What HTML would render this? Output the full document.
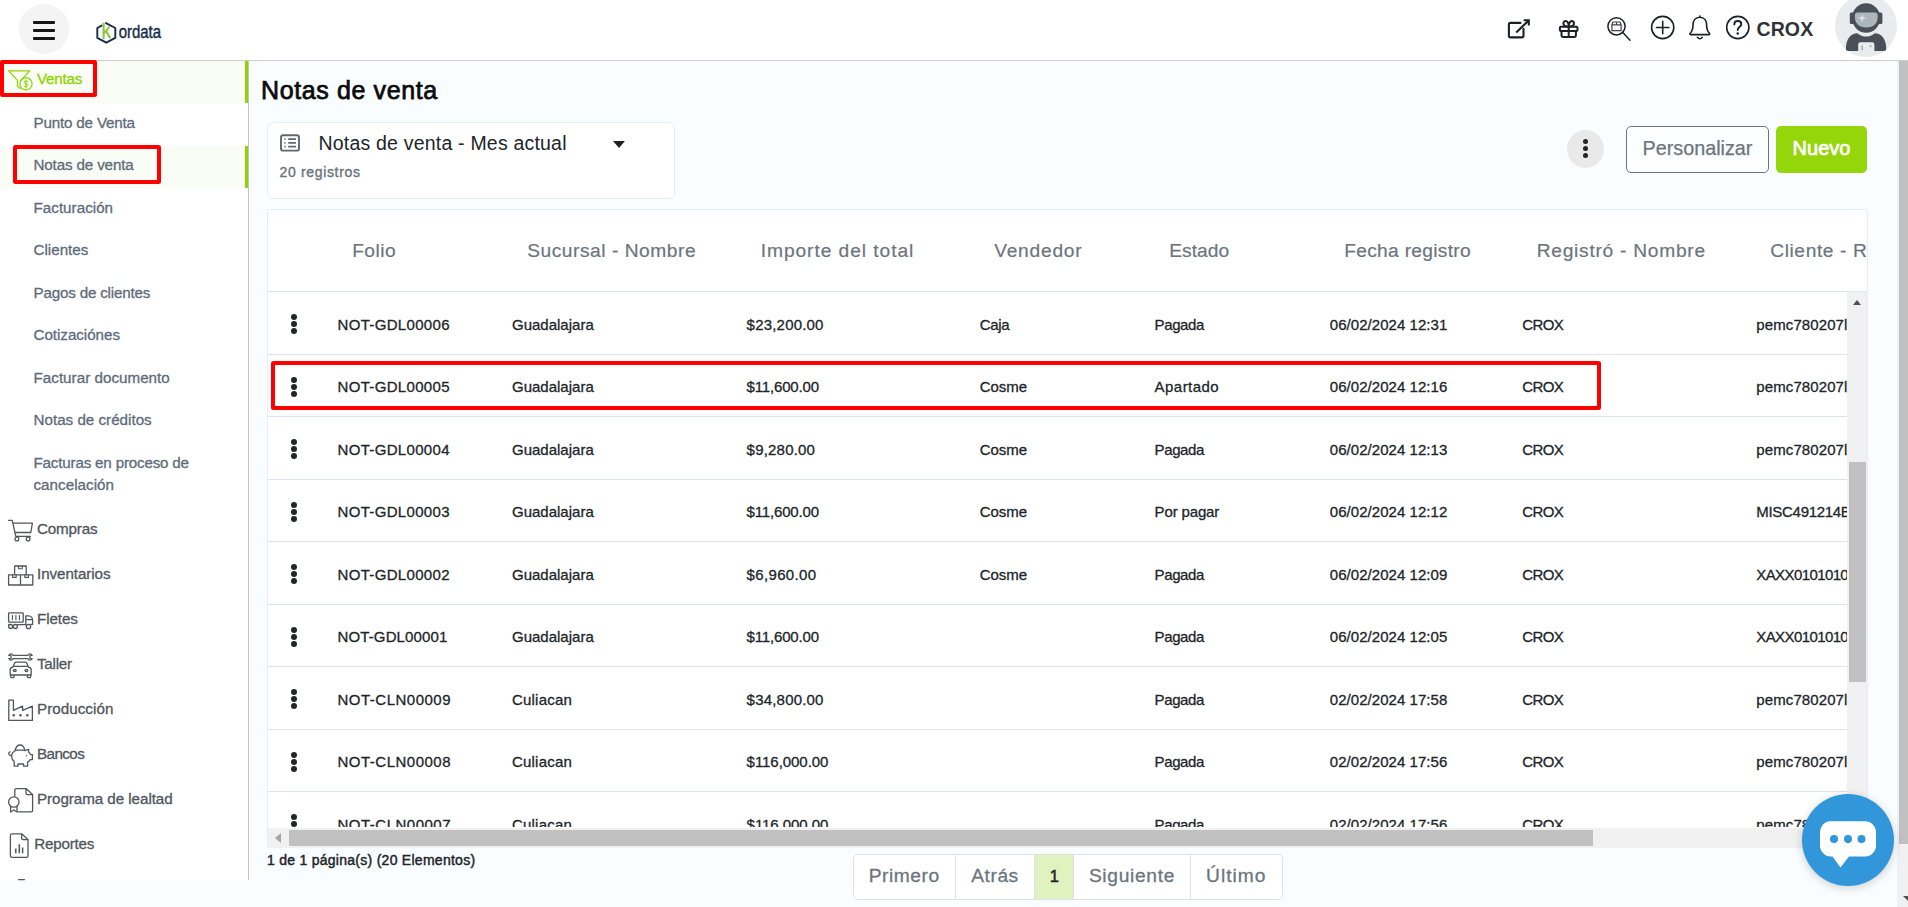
<!DOCTYPE html>
<html lang="es">
<head>
<meta charset="utf-8">
<title>Notas de venta</title>
<style>
*{box-sizing:border-box;margin:0;padding:0}
html,body{width:1908px;height:907px;overflow:hidden}
body{font-family:"Liberation Sans",sans-serif;background:#fafdff;color:#212529;position:relative}
.a{position:absolute;white-space:nowrap}
svg{position:absolute;overflow:visible}
#header{position:absolute;left:0;top:0;width:1908px;height:61px;background:#fff;border-bottom:1px solid #cdcdcd}
#burger{position:absolute;left:19px;top:4px;width:50px;height:50px;border-radius:50%;background:#f4f4f4}
#burger i{position:absolute;left:14px;width:22px;height:3.2px;background:#151515;border-radius:1px}
#sidebar{position:absolute;left:0;top:61px;width:249px;height:819px;background:#fff;border-right:1px solid #c4c4c4}
.act{position:absolute;left:0;width:248px;background:#fafdf5;border-right:3px solid #8fd400}
.sb{position:absolute;left:33.5px;font-size:15.2px;color:#5f6b7a;white-space:nowrap;line-height:20px;-webkit-text-stroke:0.3px #5f6b7a}
.mi{position:absolute;left:37px;font-size:15.2px;color:#51565c;white-space:nowrap;line-height:20px;-webkit-text-stroke:0.3px #51565c}
.red{position:absolute;border:4px solid #fe0000;border-radius:2.5px}
.ico{fill:none;stroke:#53565b;stroke-width:1.3;stroke-linecap:round;stroke-linejoin:round}
.hico{fill:none;stroke:#1d2125;stroke-width:1.9;stroke-linecap:round;stroke-linejoin:round}
#card{position:absolute;left:267px;top:208.6px;width:1601px;height:639.4px;background:#fff;border:1px solid #e4edf9;border-radius:2px}
.th{position:absolute;top:240px;font-size:19.2px;letter-spacing:0.5px;color:#6c757d;white-space:nowrap;line-height:22px;-webkit-text-stroke:0.2px #6c757d}
.td{position:absolute;font-size:15px;letter-spacing:0.15px;color:#212529;white-space:nowrap;line-height:20px;-webkit-text-stroke:0.3px #212529}
.hl{position:absolute;left:268px;width:1579px;height:1px;background:#dde4ee}
.dots i{position:absolute;width:6px;height:6px;border-radius:50%;background:#212529;left:0}
.dots{position:absolute;width:6px;height:20px}
.pg{position:absolute;top:853.5px;height:46px;border:1px solid #dee2e6;border-left:none;background:#fff;font-size:19.2px;color:#6c757d;line-height:42.3px;text-align:center;-webkit-text-stroke:0.3px #6c757d;padding-left:0.5px}
</style>
</head>
<body>
<div id="header">
<div id="burger"><i style="top:17.1px"></i><i style="top:24.7px"></i><i style="top:32.5px"></i></div>
<svg style="left:90px;top:16px" width="80" height="34" viewBox="90 16 80 34">
<path d="M106 23.1 L115.3 28 L115.3 37.8 L106.3 42.7 L97.3 37.8 L97.3 28 L101.6 25.6" fill="none" stroke="#14304a" stroke-width="1.9" stroke-linejoin="round" stroke-linecap="round"/>
<path d="M103.6 23.6 L103.6 38.3 M108.9 27.4 L104.6 32.6 M106.3 31.2 L109.8 37.6" fill="none" stroke="#8cc63f" stroke-width="2.1" stroke-linecap="round"/>
<text x="118.7" y="37.9" font-family="Liberation Sans, sans-serif" font-size="18.3" fill="#14304a" stroke="#14304a" stroke-width="0.45" textLength="42.4" lengthAdjust="spacingAndGlyphs">ordata</text>
</svg>
<svg style="left:1500px;top:8px;" width="260" height="40" viewBox="1500 8 260 40" class="hico">
<g stroke-width="2.1"><path d="M1520.5 22.9 H1510.5 Q1508.9 22.9 1508.9 24.5 V35.8 Q1508.9 37.4 1510.5 37.4 H1521.9 Q1523.5 37.4 1523.5 35.8 V28.8"/>
<path d="M1516.2 32.6 L1528.6 20.4 M1523.6 20.2 H1528.8 V25.6" stroke-linecap="butt" stroke-linejoin="miter"/></g>
<g stroke-width="2">
<rect x="1559.9" y="26.7" width="17.6" height="4.4" rx="1"/>
<path d="M1561.5 31.1 V35.6 Q1561.5 37 1562.9 37 H1574.5 Q1575.9 37 1575.9 35.6 V31.1 M1568.7 26.7 V37"/>
<path d="M1568.7 26.5 C1566.5 26.5 1563.4 25.8 1563.4 23.4 C1563.4 21.6 1565 20.7 1566.2 21.2 C1567.7 21.8 1568.7 24.2 1568.7 26.5 C1568.7 24.2 1569.7 21.8 1571.2 21.2 C1572.4 20.7 1574 21.6 1574 23.4 C1574 25.8 1570.9 26.5 1568.7 26.5"/>
</g>
<g stroke-width="1.5">
<circle cx="1616.5" cy="26.3" r="8.6"/>
<path d="M1622.8 32.4 L1630 40.2"/>
<path d="M1611.9 24.8 V30.7 H1621.1 V24.8 M1611.9 24.8 L1613 22 H1620 L1621.1 24.8 Z M1616.5 22 V24.8" stroke-width="1.2" stroke="#444"/>
</g>
<g stroke-width="1.6">
<circle cx="1662.7" cy="27.5" r="11.1"/>
<path d="M1656.5 27.5 H1668.9 M1662.7 21.3 V33.7"/>
<path d="M1699.8 16 V17.3 M1699.8 17.3 C1695.3 17.3 1693 20.8 1693 25 C1693 30 1691.5 32 1690 33.5 Q1689.6 34.6 1690.8 34.6 H1708.8 Q1710 34.6 1709.6 33.5 C1708.1 32 1706.6 30 1706.6 25 C1706.6 20.8 1704.3 17.3 1699.8 17.3 Z M1697.4 37.3 Q1699.8 40.3 1702.2 37.3"/>
<circle cx="1737.8" cy="27.5" r="11.1"/>
<path d="M1734.3 24.4 C1734.3 22.3 1735.8 21 1737.8 21 C1739.9 21 1741.3 22.3 1741.3 24.2 C1741.3 26.8 1737.7 26.9 1737.7 30" stroke-width="1.9"/>
</g>
<circle cx="1737.7" cy="33.6" r="1.25" fill="#1d2125" stroke="none"/>
</svg>
<div class="a" style="left:1756.5px;top:15.5px;font-size:19.5px;font-weight:700;line-height:26px;color:#2f3336;letter-spacing:0.1px">CROX</div>
<div class="a" style="left:1835px;top:-5.5px;width:62.4px;height:62.4px;border-radius:50%;background:#e9ecef;overflow:hidden"></div>
<svg style="left:1835px;top:-5.5px" width="62.4" height="62.4" viewBox="0 0 62.4 62.4">
<rect x="14.8" y="17.5" width="32.6" height="11.6" rx="1.5" fill="#495057"/>
<ellipse cx="31.1" cy="23" rx="14" ry="14.8" fill="#495057"/>
<path d="M22.8 17.5 H39.8 Q42.7 17.5 42.7 20.4 V22 C42.7 28.6 38.2 32.5 31.3 32.5 C24.4 32.5 19.9 28.6 19.9 22 V20.4 Q19.9 17.5 22.8 17.5 Z" fill="#adb5bd"/>
<path d="M27.2 19 L28.2 22.1 L31.6 23.1 L28.2 24.1 L27.2 27.2 L26.2 24.1 L22.8 23.1 L26.2 22.1 Z" fill="#dfe3e7"/>
<path d="M10.9 53.5 C10.9 44 16 38.2 22.5 38.2 C25 40.6 28 41.6 31.1 41.6 C34.2 41.6 37.2 40.6 39.7 38.2 C46.2 38.2 51.3 44 51.3 53.5 Q51.3 56 48.8 56 H13.4 Q10.9 56 10.9 53.5 Z" fill="#495057"/>
<path d="M23.2 56 V49.6 Q23.2 47.2 25.6 47.2 H37 Q39.4 47.2 39.4 49.6 V56 Z" fill="#e9ecef"/>
<rect x="26.2" y="50" width="1.8" height="5.5" rx="0.9" fill="#adb5bd"/>
<circle cx="35.6" cy="51.2" r="1.1" fill="#adb5bd"/>
</svg>
</div>
<div id="sidebar">
<div class="act" style="top:0;height:42px"></div>
<div class="act" style="top:85px;height:42px"></div>
</div>
<svg style="left:6px;top:68px;stroke:#8fd400;stroke-width:1.25" width="30" height="24" viewBox="6 68 30 24" class="ico">
<path d="M8.6 70.8 H29.7 L21.6 79.6 M8.6 70.8 L17.5 80.4 V86.2 L20.2 88.4"/>
<circle cx="26" cy="83.8" r="6.1"/>
<path d="M28 81.6 C27.2 80.6 24.2 80.6 24.2 82.3 C24.2 84.2 27.9 83.3 27.9 85.3 C27.9 87 24.8 87 23.9 85.9 M26 79.8 V87.9" stroke-width="1"/>
</svg>
<div class="mi" style="top:68.7px;letter-spacing:-0.2px;color:#8fd400;-webkit-text-stroke:0.3px #8fd400">Ventas</div>
<div class="sb" style="top:112.5px;letter-spacing:-0.18px">Punto de Venta</div>
<div class="sb" style="top:155.1px;letter-spacing:-0.15px">Notas de venta</div>
<div class="sb" style="top:197.6px;letter-spacing:0.02px">Facturación</div>
<div class="sb" style="top:240.2px;letter-spacing:0px">Clientes</div>
<div class="sb" style="top:282.7px;letter-spacing:-0.19px">Pagos de clientes</div>
<div class="sb" style="top:325.3px;letter-spacing:-0.04px">Cotizaciónes</div>
<div class="sb" style="top:367.8px;letter-spacing:0.02px">Facturar documento</div>
<div class="sb" style="top:410.4px;letter-spacing:0px">Notas de créditos</div>
<div class="sb" style="top:452.5px;letter-spacing:-0.19px">Facturas en proceso de</div>
<div class="sb" style="top:475.0px;letter-spacing:0.03px">cancelación</div>
<div class="mi" style="top:519.2px;left:37.0px;letter-spacing:-0.17px">Compras</div>
<div class="mi" style="top:564.2px;left:37.0px;letter-spacing:-0.07px">Inventarios</div>
<div class="mi" style="top:609.1px;left:37.0px;letter-spacing:-0.09px">Fletes</div>
<div class="mi" style="top:654.1px;left:37.0px;letter-spacing:-0.26px">Taller</div>
<div class="mi" style="top:699.0px;left:37.0px;letter-spacing:0.04px">Producción</div>
<div class="mi" style="top:744.0px;left:37.0px;letter-spacing:-0.58px">Bancos</div>
<div class="mi" style="top:788.9px;left:37.0px;letter-spacing:-0.06px">Programa de lealtad</div>
<div class="mi" style="top:833.9px;left:34.3px;letter-spacing:-0.24px">Reportes</div>
<svg style="left:4px;top:515px;" width="36" height="347" viewBox="4 515 36 347" class="ico">
<!-- cart -->
<path d="M8.6 520.3 H12.2 L15.8 536.3 H30.4 M13.1 523.2 H32.4 L30.8 532.5 H15"/>
<circle cx="16.9" cy="539" r="1.9"/><circle cx="28.1" cy="539" r="1.9"/>
<!-- boxes -->
<path d="M8.6 574.8 H32.8 V585 H8.6 Z M20.5 574.8 V585 M14.6 574.8 V566 H26.2 V574.8"/>
<path d="M12.6 574.8 V577.4 H16.2 V574.8 M24.8 574.8 V577.4 H28.4 V574.8 M18.6 566 V568.8 H22.2 V566" stroke-width="1.1"/>
<!-- truck -->
<rect x="8.6" y="612.8" width="14.6" height="9.4" rx="0.8"/>
<path d="M12.4 615.2 V619.8 M15.9 615.2 V619.8 M19.4 615.2 V619.8" stroke-width="1.1"/>
<path d="M25.8 624.4 V615.9 H28.6 C31 615.9 32.6 618 32.6 620.4 V624.4 H30.8 M25.8 619.6 H32.4 M17.6 624.6 H26.2 M8.8 624.4 H9.2"/>
<circle cx="10.6" cy="626.5" r="2"/><circle cx="15.3" cy="626.5" r="2"/><circle cx="28.5" cy="626.5" r="2.2"/>
<!-- taller -->
<path d="M13 655.3 H28 M13 658.7 H28 M13 655.3 C12.4 653.6 9.6 653.4 8.8 655.4 L11 655.6 V658.4 L8.8 658.6 C9.6 660.6 12.4 660.4 13 658.7 M28 655.3 C28.6 653.6 31.4 653.4 32.2 655.4 L30 655.6 V658.4 L32.2 658.6 C31.4 660.6 28.6 660.4 28 658.7"/>
<path d="M12.8 667.2 L14.8 662.8 Q15.2 662.2 16 662.2 H25.4 Q26.2 662.2 26.6 662.8 L28.6 667.2 M12.8 667.2 C11 667.4 10.2 668.6 10.2 670 V675 H31.2 V670 C31.2 668.6 30.4 667.4 28.6 667.2 M13.6 666.4 H27.8 M10.8 675 V677 Q10.8 677.6 11.4 677.6 H13.4 Q14 677.6 14 677 V675 M27.4 675 V677 Q27.4 677.6 28 677.6 H30 Q30.6 677.6 30.6 677 V675"/>
<ellipse cx="14.8" cy="670.4" rx="1.4" ry="1.1"/><ellipse cx="26.4" cy="670.4" rx="1.4" ry="1.1"/>
<!-- factory -->
<path d="M8.8 700.2 H13.4 V710.4 L22.6 706.2 V710.4 L32.4 706.2 V720.4 H8.8 Z"/>
<circle cx="13.7" cy="715.2" r="1.2" fill="#53565b" stroke="none"/><circle cx="20.5" cy="715.2" r="1.2" fill="#53565b" stroke="none"/><circle cx="27.3" cy="715.2" r="1.2" fill="#53565b" stroke="none"/>
<!-- piggy -->
<path d="M15.2 750.4 C16 746.4 18.2 745 20 745 C22 745 24.2 746.6 24.6 750"/>
<path d="M17 750.2 C13.6 751 11.6 753.6 11.6 756.4 C11.6 758.6 12.8 760.4 14.2 761.6 V766.2 H18 V764 H23.6 V766.2 H27.6 V762.2 C28.8 761.6 29.6 760.6 30.2 759.6 H32.4 V754.6 H30.6 C30.2 753.6 29.4 752.6 28.4 751.8 L28.8 749.4 C27.4 749.4 26.2 750 25.4 750.6 C24.6 750.3 23.4 750.2 22.4 750.2 Z"/>
<path d="M11.4 755.6 C9.8 755.8 8.8 754.6 8.8 753.4 C8.8 752.4 9.4 751.8 10.2 751.8"/>
<circle cx="26.4" cy="755.8" r="0.7" fill="#53565b" stroke="none"/>
<!-- lealtad -->
<path d="M14.8 796.2 V790 Q14.8 788.6 16.2 788.6 H26 L32.6 794.6 V810.4 Q32.6 811.8 31.2 811.8 H18.2 M26 788.6 V793.2 Q26 794.6 27.4 794.6 H32.6"/>
<circle cx="13.8" cy="802" r="5.2"/>
<path d="M10.6 806.4 V812 L13.8 810 L17 812 V806.4"/>
<!-- reportes -->
<path d="M10.4 835.4 Q10.4 833.8 12 833.8 H21.6 L28 839.6 V855.8 Q28 857.4 26.4 857.4 H12 Q10.4 857.4 10.4 855.8 Z M21.6 833.8 V838.2 Q21.6 839.6 23 839.6 H28"/>
<path d="M15.8 848.6 V853.2 M19.3 844.2 V853.2 M22.6 847.6 V853.2" stroke-width="1.5" stroke-linecap="butt"/>
<!-- next item peek -->
<path d="M18.6 879.6 H24.4" stroke-width="1.4"/>
</svg>
<div class="a" style="left:261px;top:74px;font-size:25px;font-weight:400;line-height:32px;color:#0c0c0c;letter-spacing:0.62px;-webkit-text-stroke:0.75px #0c0c0c">Notas de venta</div>
<div class="a" style="left:267px;top:122px;width:408px;height:77px;background:#fff;border:1px solid #e4edf9;border-radius:6px"></div>
<svg style="left:278px;top:132px;stroke:#5f6870" width="24" height="22" viewBox="278 132 24 22" class="ico">
<rect x="281" y="135.2" width="18" height="15.4" rx="2.2" stroke-width="1.9"/>
<path d="M288.2 139.1 H296 M288.2 142.9 H296 M288.2 146.7 H296" stroke-width="1.7" stroke-linecap="butt"/>
<path d="M284.4 139.1 H285.6 M284.4 142.9 H285.6 M284.4 146.7 H285.6" stroke-width="1.8" stroke-linecap="butt"/>
</svg>
<div class="a" style="left:318.5px;top:131px;font-size:19.5px;line-height:24px;letter-spacing:0.2px;color:#212529">Notas de venta - Mes actual</div>
<div class="a" style="left:613px;top:140.5px;width:0;height:0;border-left:6px solid transparent;border-right:6px solid transparent;border-top:7px solid #222"></div>
<div class="a" style="left:279.5px;top:161.9px;font-size:14px;line-height:20px;letter-spacing:0.66px;color:#6c757d;-webkit-text-stroke:0.4px #6c757d">20 registros</div>
<div class="a" style="left:1567px;top:130px;width:37px;height:37.6px;border-radius:50%;background:#e9e9e9"></div>
<div class="dots" style="left:1583px;top:139.1px"><i style="top:0;width:5.4px;height:5.4px"></i><i style="top:7px;width:5.4px;height:5.4px"></i><i style="top:14px;width:5.4px;height:5.4px"></i></div>
<div class="a" style="left:1626px;top:126px;width:143px;height:47px;border:1px solid #6c757d;border-radius:5px;background:#fcfeff;font-size:19.8px;line-height:43px;text-align:center;color:#6c757d;-webkit-text-stroke:0.25px #6c757d">Personalizar</div>
<div class="a" style="left:1776px;top:126px;width:91px;height:47px;border-radius:5px;background:#94d60a;font-size:20px;font-weight:400;-webkit-text-stroke:0.7px #fff;line-height:44px;text-align:center;color:#fff">Nuevo</div>
<div id="card"></div>
<div class="a" style="left:268px;top:209px;width:1599px;height:82px;overflow:hidden">
<div class="th" style="left:84.2px;top:30.7px;letter-spacing:0.45px">Folio</div>
<div class="th" style="left:259.2px;top:30.7px;letter-spacing:0.53px">Sucursal - Nombre</div>
<div class="th" style="left:492.7px;top:30.7px;letter-spacing:0.94px">Importe del total</div>
<div class="th" style="left:726.2px;top:30.7px;letter-spacing:0.76px">Vendedor</div>
<div class="th" style="left:901.2px;top:30.7px;letter-spacing:0.05px">Estado</div>
<div class="th" style="left:1076.2px;top:30.7px;letter-spacing:0.3px">Fecha registro</div>
<div class="th" style="left:1268.7px;top:30.7px;letter-spacing:0.73px">Registró - Nombre</div>
<div class="th" style="left:1502.2px;top:30.7px;letter-spacing:0.6px">Cliente - R</div>
</div>
<div class="hl" style="top:291px;width:1599px;background:#dfe5ec"></div>
<div class="a" style="left:268px;top:292px;width:1579px;height:535px;overflow:hidden">
<div class="td" style="left:69.5px;top:22.7px;letter-spacing:0.33px">NOT-GDL00006</div>
<div class="td" style="left:244px;top:22.7px;letter-spacing:0px">Guadalajara</div>
<div class="td" style="left:478.6px;top:22.7px;letter-spacing:0.2px">$23,200.00</div>
<div class="td" style="left:711.7px;top:22.7px;letter-spacing:-0.3px">Caja</div>
<div class="td" style="left:886.5999999999999px;top:22.7px;letter-spacing:-0.4px">Pagada</div>
<div class="td" style="left:1061.8px;top:22.7px;letter-spacing:0.05px">06/02/2024 12:31</div>
<div class="td" style="left:1254.2px;top:22.7px;letter-spacing:-0.6px">CROX</div>
<div class="td" style="left:1488.3px;top:22.7px;letter-spacing:0.1px">pemc780207l00</div>
<div class="dots" style="left:22.80000000000001px;top:22.4px"><i style="top:0"></i><i style="top:7px"></i><i style="top:14px"></i></div>
<div class="hl" style="left:0;top:62px"></div>
<div class="td" style="left:69.5px;top:85.2px;letter-spacing:0.33px">NOT-GDL00005</div>
<div class="td" style="left:244px;top:85.2px;letter-spacing:0px">Guadalajara</div>
<div class="td" style="left:478.6px;top:85.2px;letter-spacing:-0.17px">$11,600.00</div>
<div class="td" style="left:711.7px;top:85.2px;letter-spacing:-0.05px">Cosme</div>
<div class="td" style="left:886.5999999999999px;top:85.2px;letter-spacing:0.45px">Apartado</div>
<div class="td" style="left:1061.8px;top:85.2px;letter-spacing:0.05px">06/02/2024 12:16</div>
<div class="td" style="left:1254.2px;top:85.2px;letter-spacing:-0.6px">CROX</div>
<div class="td" style="left:1488.3px;top:85.2px;letter-spacing:0.1px">pemc780207l00</div>
<div class="dots" style="left:22.80000000000001px;top:84.9px"><i style="top:0"></i><i style="top:7px"></i><i style="top:14px"></i></div>
<div class="hl" style="left:0;top:124px"></div>
<div class="td" style="left:69.5px;top:147.7px;letter-spacing:0.33px">NOT-GDL00004</div>
<div class="td" style="left:244px;top:147.7px;letter-spacing:0px">Guadalajara</div>
<div class="td" style="left:478.6px;top:147.7px;letter-spacing:0.2px">$9,280.00</div>
<div class="td" style="left:711.7px;top:147.7px;letter-spacing:-0.05px">Cosme</div>
<div class="td" style="left:886.5999999999999px;top:147.7px;letter-spacing:-0.4px">Pagada</div>
<div class="td" style="left:1061.8px;top:147.7px;letter-spacing:0.05px">06/02/2024 12:13</div>
<div class="td" style="left:1254.2px;top:147.7px;letter-spacing:-0.6px">CROX</div>
<div class="td" style="left:1488.3px;top:147.7px;letter-spacing:0.1px">pemc780207l00</div>
<div class="dots" style="left:22.80000000000001px;top:147.4px"><i style="top:0"></i><i style="top:7px"></i><i style="top:14px"></i></div>
<div class="hl" style="left:0;top:187px"></div>
<div class="td" style="left:69.5px;top:210.2px;letter-spacing:0.33px">NOT-GDL00003</div>
<div class="td" style="left:244px;top:210.2px;letter-spacing:0px">Guadalajara</div>
<div class="td" style="left:478.6px;top:210.2px;letter-spacing:-0.17px">$11,600.00</div>
<div class="td" style="left:711.7px;top:210.2px;letter-spacing:-0.05px">Cosme</div>
<div class="td" style="left:886.5999999999999px;top:210.2px;letter-spacing:-0.15px">Por pagar</div>
<div class="td" style="left:1061.8px;top:210.2px;letter-spacing:0.05px">06/02/2024 12:12</div>
<div class="td" style="left:1254.2px;top:210.2px;letter-spacing:-0.6px">CROX</div>
<div class="td" style="left:1488.3px;top:210.2px;letter-spacing:-0.3px">MISC491214B86</div>
<div class="dots" style="left:22.80000000000001px;top:209.9px"><i style="top:0"></i><i style="top:7px"></i><i style="top:14px"></i></div>
<div class="hl" style="left:0;top:249px"></div>
<div class="td" style="left:69.5px;top:272.7px;letter-spacing:0.33px">NOT-GDL00002</div>
<div class="td" style="left:244px;top:272.7px;letter-spacing:0px">Guadalajara</div>
<div class="td" style="left:478.6px;top:272.7px;letter-spacing:0.34px">$6,960.00</div>
<div class="td" style="left:711.7px;top:272.7px;letter-spacing:-0.05px">Cosme</div>
<div class="td" style="left:886.5999999999999px;top:272.7px;letter-spacing:-0.4px">Pagada</div>
<div class="td" style="left:1061.8px;top:272.7px;letter-spacing:0.05px">06/02/2024 12:09</div>
<div class="td" style="left:1254.2px;top:272.7px;letter-spacing:-0.6px">CROX</div>
<div class="td" style="left:1488.3px;top:272.7px;letter-spacing:-0.6px">XAXX010101000</div>
<div class="dots" style="left:22.80000000000001px;top:272.4px"><i style="top:0"></i><i style="top:7px"></i><i style="top:14px"></i></div>
<div class="hl" style="left:0;top:312px"></div>
<div class="td" style="left:69.5px;top:335.2px;letter-spacing:0.13px">NOT-GDL00001</div>
<div class="td" style="left:244px;top:335.2px;letter-spacing:0px">Guadalajara</div>
<div class="td" style="left:478.6px;top:335.2px;letter-spacing:-0.17px">$11,600.00</div>
<div class="td" style="left:886.5999999999999px;top:335.2px;letter-spacing:-0.4px">Pagada</div>
<div class="td" style="left:1061.8px;top:335.2px;letter-spacing:0.05px">06/02/2024 12:05</div>
<div class="td" style="left:1254.2px;top:335.2px;letter-spacing:-0.6px">CROX</div>
<div class="td" style="left:1488.3px;top:335.2px;letter-spacing:-0.6px">XAXX010101000</div>
<div class="dots" style="left:22.80000000000001px;top:334.9px"><i style="top:0"></i><i style="top:7px"></i><i style="top:14px"></i></div>
<div class="hl" style="left:0;top:374px"></div>
<div class="td" style="left:69.5px;top:397.7px;letter-spacing:0.5px">NOT-CLN00009</div>
<div class="td" style="left:244px;top:397.7px;letter-spacing:0.2px">Culiacan</div>
<div class="td" style="left:478.6px;top:397.7px;letter-spacing:0.2px">$34,800.00</div>
<div class="td" style="left:886.5999999999999px;top:397.7px;letter-spacing:-0.4px">Pagada</div>
<div class="td" style="left:1061.8px;top:397.7px;letter-spacing:0.05px">02/02/2024 17:58</div>
<div class="td" style="left:1254.2px;top:397.7px;letter-spacing:-0.6px">CROX</div>
<div class="td" style="left:1488.3px;top:397.7px;letter-spacing:0.1px">pemc780207l00</div>
<div class="dots" style="left:22.80000000000001px;top:397.4px"><i style="top:0"></i><i style="top:7px"></i><i style="top:14px"></i></div>
<div class="hl" style="left:0;top:437px"></div>
<div class="td" style="left:69.5px;top:460.2px;letter-spacing:0.5px">NOT-CLN00008</div>
<div class="td" style="left:244px;top:460.2px;letter-spacing:0.2px">Culiacan</div>
<div class="td" style="left:478.6px;top:460.2px;letter-spacing:-0.05px">$116,000.00</div>
<div class="td" style="left:886.5999999999999px;top:460.2px;letter-spacing:-0.4px">Pagada</div>
<div class="td" style="left:1061.8px;top:460.2px;letter-spacing:0.05px">02/02/2024 17:56</div>
<div class="td" style="left:1254.2px;top:460.2px;letter-spacing:-0.6px">CROX</div>
<div class="td" style="left:1488.3px;top:460.2px;letter-spacing:0.1px">pemc780207l00</div>
<div class="dots" style="left:22.80000000000001px;top:459.9px"><i style="top:0"></i><i style="top:7px"></i><i style="top:14px"></i></div>
<div class="hl" style="left:0;top:499px"></div>
<div class="td" style="left:69.5px;top:522.7px;letter-spacing:0.5px">NOT-CLN00007</div>
<div class="td" style="left:244px;top:522.7px;letter-spacing:0.2px">Culiacan</div>
<div class="td" style="left:478.6px;top:522.7px;letter-spacing:-0.05px">$116,000.00</div>
<div class="td" style="left:886.5999999999999px;top:522.7px;letter-spacing:-0.4px">Pagada</div>
<div class="td" style="left:1061.8px;top:522.7px;letter-spacing:0.05px">02/02/2024 17:56</div>
<div class="td" style="left:1254.2px;top:522.7px;letter-spacing:-0.6px">CROX</div>
<div class="td" style="left:1488.3px;top:522.7px;letter-spacing:0.1px">pemc780207l00</div>
<div class="dots" style="left:22.80000000000001px;top:522.4px"><i style="top:0"></i><i style="top:7px"></i><i style="top:14px"></i></div>
</div>
<div class="a" style="left:1847px;top:292px;width:20px;height:555px;background:#f1f1f1"></div>
<div class="a" style="left:1849px;top:462px;width:17px;height:220px;background:#c1c1c1"></div>
<div class="a" style="left:1853px;top:300px;width:0;height:0;border-left:4.5px solid transparent;border-right:4.5px solid transparent;border-bottom:5px solid #505050"></div>
<div class="a" style="left:268px;top:827.5px;width:1579px;height:20px;background:#f1f1f1"></div>
<div class="a" style="left:289px;top:829.5px;width:1304px;height:16px;background:#c1c1c1"></div>
<div class="a" style="left:275.3px;top:832.5px;width:0;height:0;border-top:5px solid transparent;border-bottom:5px solid transparent;border-right:6px solid #a6a6a6"></div>
<div class="red" style="left:270.5px;top:360.7px;width:1330.7px;height:49px"></div>
<div class="red" style="left:0px;top:59.5px;width:97.3px;height:37.3px"></div>
<div class="red" style="left:12.5px;top:145.4px;width:148px;height:38.2px"></div>
<div class="a" style="left:267px;top:850.2px;font-size:14px;line-height:20px;color:#212529;-webkit-text-stroke:0.45px #212529;letter-spacing:0.27px">1 de 1 página(s) (20 Elementos)</div>
<div class="pg" style="left:852.5px;width:103.0px;letter-spacing:0.55px;border-left:1px solid #dee2e6;border-radius:5px 0 0 5px;">Primero</div>
<div class="pg" style="left:955.5px;width:79.5px;letter-spacing:0.55px;">Atrás</div>
<div class="pg" style="left:1035px;width:39px;letter-spacing:0px;background:#e0f2bd;color:#212529;font-size:16.5px;-webkit-text-stroke:0.5px #212529;line-height:43.3px;">1</div>
<div class="pg" style="left:1074px;width:116.5px;letter-spacing:0.69px;">Siguiente</div>
<div class="pg" style="left:1190.5px;width:92.0px;letter-spacing:1.0px;border-radius:0 5px 5px 0;">Último</div>
<div class="a" style="left:1897px;top:61px;width:11px;height:846px;background:#f1f1f1"></div>
<div class="a" style="left:1899px;top:61px;width:9px;height:783px;background:#c1c1c1"></div>
<div class="a" style="left:1903px;top:895.8px;width:0;height:0;border-left:5px solid transparent;border-right:5px solid transparent;border-top:5.5px solid #505050"></div>
<div class="a" style="left:1802px;top:794px;width:92px;height:92px;border-radius:50%;background:#3197da;box-shadow:0 2px 10px rgba(0,0,0,0.18)"></div>
<svg style="left:1802px;top:794px" width="92" height="92" viewBox="0 0 92 92"><path d="M27 27.2 H63 A11 11 0 0 1 74 38.2 V51.5 A11 11 0 0 1 63 62.5 H47 L38.5 73.5 L30.5 62.5 H29 A11 11 0 0 1 18 51.5 V38.2 A11 11 0 0 1 27 27.2 Z" fill="#fff"/><circle cx="32" cy="45" r="4" fill="#3197da"/><circle cx="46" cy="45" r="4" fill="#3197da"/><circle cx="59.5" cy="45" r="4" fill="#3197da"/></svg>
</body>
</html>
